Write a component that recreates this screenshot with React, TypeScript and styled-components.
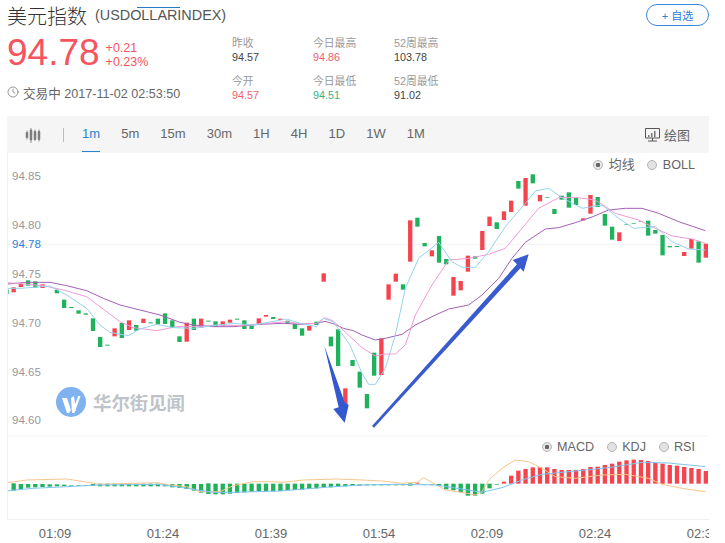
import React from 'react';
import styled, { createGlobalStyle } from 'styled-components';
import { Clock } from 'lucide-react';

const GlobalStyle = createGlobalStyle`
    html, body {
        margin: 0;
        padding: 0;
        background: #fff;
        font-family: "Liberation Sans", "Noto Sans CJK SC", sans-serif;
    }
`;

const Page = styled.div`
    position: relative;
    width: 725px;
    height: 543px;
    overflow: hidden;
    padding: 0 16px 0 7px;
    box-sizing: border-box;
`;

const TitleRow = styled.div`
    display: flex;
    justify-content: space-between;
    align-items: flex-start;
    height: 34px;
`;

const TitleText = styled.div`
    display: flex;
    align-items: center;
    gap: 8px;
    height: 30px;
    position: relative;
`;

const Name = styled.span`
    font-size: 20px;
    font-weight: 300;
    color: #333;
`;

const Ticker = styled.span`
    font-size: 14.4px;
    color: #555;
`;

const StrayLine = styled.i`
    position: absolute;
    left: 130px;
    top: 7px;
    width: 43px;
    height: 1px;
    background: #2a7ac8;
`;

const AddButton = styled.button`
    margin-top: 4px;
    width: 63px;
    height: 22px;
    border: 1px solid #3a86d8;
    border-radius: 11px;
    background: #fff;
    color: #2f80d8;
    font: 11px "Liberation Sans", "Noto Sans CJK SC", sans-serif;
    padding: 0;
`;

const Summary = styled.div`
    display: flex;
    height: 82px;
`;

const Left = styled.div`
    width: 225px;
`;

const PriceRow = styled.div`
    display: flex;
    align-items: center;
    gap: 6px;
    height: 37px;
    color: #f5555f;
`;

const Price = styled.span`
    font-size: 37px;
    line-height: 37px;
`;

const Delta = styled.div`
    font-size: 12.5px;
    line-height: 14px;
    padding-top: 5px;
`;

const TimeRow = styled.div`
    display: flex;
    align-items: center;
    gap: 4px;
    margin-top: 12px;
    height: 18px;
    font-size: 12.6px;
    color: #666;
`;

const Stats = styled.div`
    display: grid;
    grid-template-columns: repeat(3, 81px);
    row-gap: 10px;
    padding-top: 2px;
    align-content: start;
`;

const Stat = styled.div`
    font-size: 10.8px;
    line-height: 14px;
`;

const StatLabel = styled.div`
    color: #999;
`;

const StatValue = styled.div<{ $tone?: string }>`
    color: ${p => p.$tone || '#444'};
`;

const Toolbar = styled.div`
    display: flex;
    align-items: center;
    height: 37px;
    background: #f5f5f5;
`;

const BarsIcon = styled.svg`
    margin-left: 18px;
    margin-top: 1px;
`;

const Sep = styled.i`
    width: 1px;
    height: 14px;
    margin: 1px 18px 0 22px;
    background: #bbb;
`;

const Tabs = styled.div`
    display: flex;
    gap: 21.1px;
    height: 100%;
`;

const Tab = styled.div<{ $active?: boolean }>`
    display: flex;
    align-items: center;
    font-size: 13px;
    color: ${p => (p.$active ? '#2a7fd8' : '#666')};
    border-bottom: 1px solid ${p => (p.$active ? '#2a7fd8' : 'transparent')};
    box-sizing: border-box;
    height: 36px;
`;

const Draw = styled.div`
    margin-left: auto;
    margin-right: 19px;
    display: flex;
    align-items: center;
    gap: 4px;
    font-size: 13px;
    color: #666;
`;

const Chart = styled.div`
    position: relative;
    height: 367px;
    border-left: 1px solid #f0f0f0;
    border-bottom: 1px solid #f0f0f0;
    box-sizing: border-box;
`;

const ChartSvg = styled.svg`
    display: block;
`;

const AxisLabel = styled.span<{ $top: number; $current?: boolean }>`
    position: absolute;
    left: 4px;
    top: ${p => p.$top}px;
    font-size: 11.5px;
    line-height: 14px;
    color: ${p => (p.$current ? '#2a7fd8' : '#999')};
`;

const Legend = styled.div<{ $top: number }>`
    position: absolute;
    right: 14px;
    top: ${p => p.$top}px;
    display: flex;
    align-items: center;
    height: 14px;
    gap: 12.5px;
    font-size: 12.6px;
    color: #666;
`;

const LegendItem = styled.span`
    display: flex;
    align-items: center;
    gap: 5.5px;
`;

const LegendCjk = styled.span`
    font-size: 13px;
    line-height: 14px;
`;

const Radio = styled.i<{ $on?: boolean }>`
    display: block;
    box-sizing: border-box;
    width: 10px;
    height: 10px;
    border-radius: 50%;
    border: 1px solid #b4b4b4;
    background: ${p => (p.$on ? 'radial-gradient(circle, #666 0 2px, #e8e8e8 2.5px)' : '#e2e2e2')};
`;

const Watermark = styled.div`
    position: absolute;
    left: 48px;
    top: 234px;
    display: flex;
    align-items: center;
    gap: 7px;
    font-size: 18.4px;
    font-weight: 700;
    color: #bfc3c8;
`;

const TimeAxis = styled.div`
    display: flex;
    gap: 12px;
    height: 23px;
    padding-top: 4px;
    box-sizing: border-box;
    overflow: hidden;
    align-items: center;
`;

const Tick = styled.span`
    flex: 0 0 96px;
    text-align: center;
    font-size: 13px;
    color: #666;
`;

// all drawing coordinates below are in 3x units, like the zoomed crops
const UP = '#f6444e';
const DOWN = '#20b15d';

// [top, bottom, isUp], one per minute
const candles: [number, number, number][] = [
    [403, 417, 0], [397, 412, 1], [386, 396, 1], [376, 392, 0], [379, 398, 0], [388, 399, 1], [0, 0, 0], [404, 415, 0],
    [434, 459, 0], [456, 459, 0], [466, 476, 0], [475, 479, 0], [490, 528, 0], [546, 576, 0], [569, 572, 0], [520, 544, 1],
    [504, 549, 0], [496, 525, 1], [510, 527, 0], [491, 504, 1], [502, 505, 0], [491, 508, 0], [475, 507, 0], [496, 519, 0],
    [544, 561, 0], [503, 560, 1], [491, 525, 0], [491, 518, 1], [497, 500, 0], [499, 515, 0], [499, 512, 1], [494, 503, 1],
    [491, 494, 0], [496, 522, 0], [512, 522, 0], [490, 507, 1], [480, 485, 1], [486, 492, 0], [491, 495, 1], [497, 505, 0],
    [506, 522, 0], [520, 542, 0], [513, 527, 1], [500, 510, 0], [355, 380, 1], [545, 574, 0], [523, 633, 0], [700, 752, 1],
    [615, 633, 0], [650, 698, 0], [717, 760, 0], [593, 662, 0], [550, 660, 1], [388, 434, 1], [356, 380, 1], [388, 404, 0],
    [196, 320, 1], [188, 215, 0], [264, 274, 0], [286, 304, 1], [243, 323, 0], [312, 328, 0], [366, 422, 1], [378, 406, 1],
    [302, 350, 1], [304, 311, 0], [228, 285, 1], [185, 213, 1], [202, 222, 0], [169, 195, 1], [137, 171, 1], [78, 101, 0],
    [69, 152, 1], [58, 85, 0], [120, 139, 1], [126, 128, 0], [162, 177, 0], [122, 134, 0], [112, 158, 0], [129, 150, 0],
    [190, 196, 1], [120, 176, 1], [126, 156, 0], [177, 212, 0], [215, 254, 0], [232, 258, 1], [207, 209, 0], [204, 206, 0],
    [198, 200, 0], [197, 242, 0], [225, 236, 0], [240, 301, 0], [273, 277, 0], [273, 276, 0], [291, 303, 1], [252, 281, 1],
    [259, 323, 0], [266, 308, 1],
];

// [top, bottom, isUp]
const macd: [number, number, number][] = [
    [145, 167, 0], [147, 162, 0], [147, 158, 0], [147, 157, 0], [147, 156, 0], [148, 155, 0], [148, 154, 0], [149, 153, 0],
    [150, 152, 0], [150, 152, 0], [150, 152, 0], [147, 153, 0], [146, 154, 0], [146, 154, 0], [146, 154, 0], [146, 154, 0],
    [146, 154, 0], [146, 154, 0], [146, 154, 0], [146, 154, 0], [146, 154, 0], [148, 154, 0], [147, 157, 0], [147, 159, 0],
    [147, 162, 0], [147, 167, 0], [147, 173, 0], [145, 177, 0], [146, 178, 0], [146, 178, 0], [146, 176, 0], [146, 174, 0],
    [146, 172, 0], [146, 170, 0], [146, 169, 0], [146, 169, 0], [146, 169, 0], [146, 168, 0], [146, 166, 0], [146, 165, 0],
    [146, 164, 0], [146, 162, 0], [146, 160, 0], [146, 158, 0], [146, 157, 0], [146, 156, 0], [147, 154, 0], [147, 153, 0],
    [148, 152, 0], [148, 151, 0], [148, 151, 0], [148, 151, 0], [148, 151, 0], [148, 151, 0], [148, 151, 0], [145, 152, 0],
    [143, 146, 1], [148, 150, 0], [148, 150, 0], [147, 152, 0], [146, 163, 0], [146, 166, 0], [146, 172, 0], [146, 182, 0],
    [146, 182, 0], [146, 176, 0], [146, 160, 0], [147, 149, 0], [140, 146, 1], [122, 146, 1], [107, 146, 1], [102, 146, 1],
    [97, 146, 1], [97, 146, 1], [97, 146, 1], [102, 146, 1], [105, 146, 1], [105, 146, 1], [105, 146, 1], [102, 146, 1],
    [96, 146, 1], [95, 146, 1], [90, 146, 1], [86, 146, 1], [80, 146, 1], [76, 146, 1], [74, 146, 1], [75, 146, 1],
    [78, 146, 1], [84, 146, 1], [86, 146, 1], [90, 146, 1], [92, 146, 1], [96, 146, 1], [99, 146, 1], [102, 146, 1],
    [108, 146, 1],
];

const purple = '24,387 80,382 150,382 200,392 260,407 310,430 360,450 420,465 480,480 540,502 580,510 640,515 700,515 780,508 850,505 900,508 950,505 975,499 1000,506 1030,520 1060,527 1086,540 1126,555 1156,550 1206,538 1246,510 1296,485 1346,462 1406,450 1446,420 1496,370 1536,310 1576,262 1636,222 1676,218 1726,203 1776,186 1826,165 1876,160 1926,160 1976,175 2036,200 2116,227';
const pink = '24,383 80,388 130,392 190,405 260,425 300,455 360,500 400,518 470,527 530,515 590,515 650,510 720,512 800,505 860,500 900,506 950,505 975,488 1000,498 1040,535 1086,578 1126,603 1156,597 1186,597 1216,570 1246,480 1296,390 1346,315 1406,310 1466,298 1516,280 1566,220 1616,160 1676,128 1726,127 1786,135 1846,175 1916,195 1966,220 2016,243 2076,252 2116,265';
const blue = '24,400 60,400 100,397 150,393 200,420 260,460 300,510 330,532 385,542 420,522 470,508 520,518 580,520 640,512 700,505 760,510 860,492 900,505 950,515 970,490 1000,500 1050,570 1086,655 1106,688 1126,688 1156,640 1186,540 1216,400 1256,310 1316,262 1356,320 1386,337 1426,337 1466,290 1516,215 1576,145 1606,108 1646,100 1686,128 1746,160 1806,150 1856,190 1901,220 1966,215 2016,260 2066,282 2116,285';
const difLine = '24,143 80,135 200,132 240,138 300,148 400,145 470,143 510,150 560,155 600,170 660,170 700,152 760,140 820,140 850,142 910,135 1010,132 1086,135 1146,138 1206,145 1251,142 1271,128 1296,142 1336,165 1386,172 1426,180 1446,170 1466,135 1506,100 1546,75 1586,80 1626,100 1666,125 1726,130 1806,120 1876,118 1946,130 1986,148 2046,160 2116,170';
const deaLine = '24,167 100,160 200,155 300,150 470,148 530,155 640,172 700,172 840,168 1000,155 1086,150 1186,148 1306,150 1386,162 1446,172 1506,158 1566,135 1626,118 1726,108 1826,98 1926,82 2006,84 2116,95';

const slot = (i: number) => 41 + 21.63 * i - 6.5;

const Candles = () => (
    <g transform="translate(0,465)">
        {candles.map((c, i) => c[1] > c[0] && (
            <rect key={i} x={slot(i - 1)} y={c[0]} width={13} height={c[1] - c[0]} fill={c[2] ? UP : DOWN} />
        ))}
        <polyline points={purple} fill="none" stroke="#a45fb5" strokeWidth={3} strokeLinejoin="round" />
        <polyline points={pink} fill="none" stroke="#f29ad6" strokeWidth={3} strokeLinejoin="round" />
        <polyline points={blue} fill="none" stroke="#96d3f2" strokeWidth={3} strokeLinejoin="round" />
        <polygon points="973,572 1034,742 1046,750 1034,803 1000,762 1016,757" fill="#3358cf" />
        <polygon points="1116,813 1551,328 1538,315 1586,298 1571,350 1561,340 1122,818" fill="#3a5bcf" />
    </g>
);

const Macd = () => (
    <g transform="translate(0,1305)">
        {macd.map((b, i) => (
            <rect key={i} x={slot(i)} y={b[0]} width={13} height={b[1] - b[0]} fill={b[2] ? UP : DOWN} />
        ))}
        <polyline points={difLine} fill="none" stroke="#f6c68c" strokeWidth={3} strokeLinejoin="round" />
        <polyline points={deaLine} fill="none" stroke="#7ec4f0" strokeWidth={3} strokeLinejoin="round" />
    </g>
);

export default function App() {
    return (
        <Page>
            <GlobalStyle />
            <TitleRow>
                <TitleText>
                    <Name>美元指数</Name>
                    <Ticker>(USDOLLARINDEX)</Ticker>
                    <StrayLine />
                </TitleText>
                <AddButton>+ 自选</AddButton>
            </TitleRow>
            <Summary>
                <Left>
                    <PriceRow>
                        <Price>94.78</Price>
                        <Delta>+0.21<br />+0.23%</Delta>
                    </PriceRow>
                    <TimeRow>
                        <Clock size={12} strokeWidth={1.2} color="#555" />
                        <span>交易中 2017-11-02 02:53:50</span>
                    </TimeRow>
                </Left>
                <Stats>
                    <Stat><StatLabel>昨收</StatLabel><StatValue>94.57</StatValue></Stat>
                    <Stat><StatLabel>今日最高</StatLabel><StatValue $tone="#f0616b">94.86</StatValue></Stat>
                    <Stat><StatLabel>52周最高</StatLabel><StatValue>103.78</StatValue></Stat>
                    <Stat><StatLabel>今开</StatLabel><StatValue $tone="#f0616b">94.57</StatValue></Stat>
                    <Stat><StatLabel>今日最低</StatLabel><StatValue $tone="#3bb27c">94.51</StatValue></Stat>
                    <Stat><StatLabel>52周最低</StatLabel><StatValue>91.02</StatValue></Stat>
                </Stats>
            </Summary>
            <Toolbar>
                <BarsIcon width="16" height="16" viewBox="0 0 16 16">
                    <g stroke="#777" strokeWidth="0.8" fill="#777">
                        <path d="M2 3.500v9M6 1v15M10 2.500v11.500M14 2.500v12" fill="none" />
                        <path d="M1.200 5.500h1.600v5H1.200zM5.200 3h1.600v10H5.200zM9.200 4.500h1.600v8H9.200zM13.200 4.500h1.600v8h-1.600z" />
                    </g>
                </BarsIcon>
                <Sep />
                <Tabs>
                    <Tab $active>1m</Tab>
                    <Tab>5m</Tab>
                    <Tab>15m</Tab>
                    <Tab>30m</Tab>
                    <Tab>1H</Tab>
                    <Tab>4H</Tab>
                    <Tab>1D</Tab>
                    <Tab>1W</Tab>
                    <Tab>1M</Tab>
                </Tabs>
                <Draw>
                    <svg width="15" height="15" viewBox="0 0 15 15">
                        <path d="M.5 1.500h14v9.500H.5zM3 14h9M7.500 11v3" fill="none" stroke="#555" />
                        <path d="M3 10V8h1.500v2zM6 10V6h1.500v4zM9 10V4h1.500v6z" fill="#777" />
                    </svg>
                    <span>绘图</span>
                </Draw>
            </Toolbar>
            <Chart>
                <ChartSvg width="701" height="366" viewBox="24 459 2103 1098">
                    <line x1="24" y1="733" x2="2127" y2="733" stroke="#f2f2f2" strokeWidth="3" />
                    <line x1="24" y1="1308" x2="2127" y2="1308" stroke="#f2f2f2" strokeWidth="3" />
                    <Candles />
                    <Macd />
                </ChartSvg>
                <AxisLabel $top={16}>94.85</AxisLabel>
                <AxisLabel $top={65}>94.80</AxisLabel>
                <AxisLabel $top={84} $current>94.78</AxisLabel>
                <AxisLabel $top={114}>94.75</AxisLabel>
                <AxisLabel $top={163}>94.70</AxisLabel>
                <AxisLabel $top={212}>94.65</AxisLabel>
                <AxisLabel $top={260}>94.60</AxisLabel>
                <Legend $top={5}>
                    <LegendItem><Radio $on /><LegendCjk>均线</LegendCjk></LegendItem>
                    <LegendItem><Radio />BOLL</LegendItem>
                </Legend>
                <Legend $top={287}>
                    <LegendItem><Radio $on />MACD</LegendItem>
                    <LegendItem><Radio />KDJ</LegendItem>
                    <LegendItem><Radio />RSI</LegendItem>
                </Legend>
                <Watermark>
                    <svg width="30" height="30" viewBox="0 0 30 30">
                        <circle cx="15" cy="15" r="15" fill="#7fb2ee" />
                        <path d="M6 11h5l4 12-2 3h-2zM15 11l3-2 2 14-2 3h-2zM18 21l4-12h2.500l-6 17z" fill="#fff" />
                    </svg>
                    <span>华尔街见闻</span>
                </Watermark>
            </Chart>
            <TimeAxis>
                <Tick>01:09</Tick>
                <Tick>01:24</Tick>
                <Tick>01:39</Tick>
                <Tick>01:54</Tick>
                <Tick>02:09</Tick>
                <Tick>02:24</Tick>
                <Tick>02:39</Tick>
            </TimeAxis>
        </Page>
    );
}
